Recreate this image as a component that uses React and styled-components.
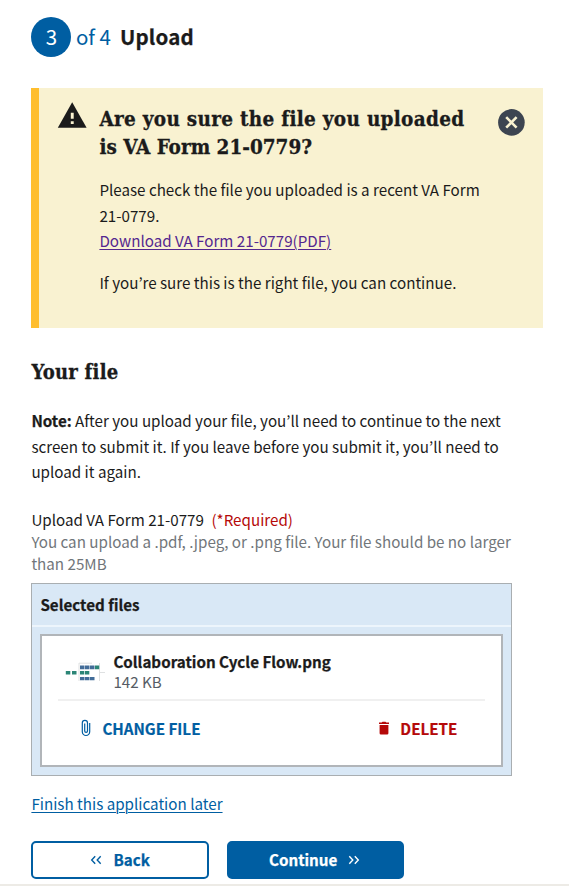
import React from "react";
import styled, { createGlobalStyle } from "styled-components";

const sans = '"Noto Sans CJK KR", "Noto Sans", sans-serif';
const serif = '"DejaVu Serif Condensed", "DejaVu Serif", serif';
const blue = "#005ea2";
const ink = "#1b1b1b";

const GlobalStyle = createGlobalStyle`
  *, *::before, *::after { box-sizing: border-box; }
  body { margin: 0; background: #fff; overflow: hidden; }
  strong { -webkit-text-stroke: 0.25px currentColor; }
`;

const Page = styled.main`
  display: flex;
  flex-direction: column;
  height: 886px;
  padding-left: 31.4px;
  border-bottom: 2px solid #edebe6;
  background: #fff;
  color: ${ink};
  font-family: ${sans};
  font-size: 15.18px;
  line-height: 25.5px;
`;

const Line = styled.span`
  display: block;
  white-space: nowrap;
  letter-spacing: ${(p) => p.$track || 0}px;
`;

const StepHeader = styled.header`
  display: flex;
  align-items: center;
  height: 41px;
  margin-top: 16px;
  font-size: 20.5px;
  line-height: 38px;
`;

const StepCircle = styled.span`
  width: 40px;
  height: 40px;
  border-radius: 50%;
  background: ${blue};
  color: #fff;
  text-align: center;
  line-height: 39px;
`;

const StepCount = styled.span`
  width: 44px;
  height: 40px;
  margin-left: 4.5px;
  color: ${blue};
  white-space: nowrap;
`;

const StepTitle = styled.strong`
  height: 40px;
  letter-spacing: 0.2px;
`;

const Alert = styled.section`
  display: flex;
  width: 512px;
  height: 240px;
  margin-top: 31px;
  padding: 16px 18px 0 18px;
  border-left: 8px solid #ffbe2e;
  background: #f9f2d1;
`;

const WarningIcon = styled.svg`
  flex: none;
  width: 30px;
  height: 27px;
  margin-right: 12px;
  margin-top: -3px;
`;

const AlertBody = styled.div`
  width: 398px;
`;

const Heading = styled.h2`
  margin: ${(p) => p.$top || 0}px 0 0;
  font-family: ${serif};
  font-size: ${(p) => p.$size}px;
  line-height: 28px;
  font-weight: 700;
  -webkit-text-stroke: 0.3px ${ink};
`;

const Paragraph = styled.p`
  margin: ${(p) => p.$top}px 0 0;
`;

const Link = styled.a`
  color: ${(p) => (p.$visited ? "#54278f" : blue)};
  text-decoration: underline;
  text-decoration-thickness: 1px;
  text-underline-offset: 2px;
  text-decoration-skip-ink: auto;
`;

const CloseButton = styled.button`
  flex: none;
  width: 28px;
  height: 28px;
  margin-top: 4px;
  padding: 0;
  border: 0;
  background: none;
  svg { display: block; }
`;

const FieldLabel = styled.div`
  display: flex;
  gap: 7.5px;
  margin-top: 23px;
  line-height: 22px;
`;

const Required = styled.span`
  color: #b50909;
`;

const Hint = styled.div`
  color: #71767a;
  line-height: 22px;
`;

const FilesPanel = styled.section`
  width: 480.6px;
  height: 193px;
  margin-top: 9.5px;
  border: 1px solid #a9aeb1;
  background: #d9e8f6;
`;

const PanelTitle = styled.h3`
  height: 43px;
  margin: 0;
  padding-left: 8px;
  border-bottom: 2px solid #edf5fc;
  font-size: inherit;
  font-weight: 700;
  line-height: 41px;
  -webkit-text-stroke: 0.25px currentColor;
`;

const FileCard = styled.div`
  width: 463px;
  height: 133px;
  margin: 7px 0 0 8px;
  padding: 15px 16px 0;
  border: 2px solid #b1b5b9;
  background: #fff;
`;

const FileInfo = styled.div`
  display: flex;
  height: 50px;
  padding-left: 7px;
  border-bottom: 2px solid #f0f0f0;
  line-height: 20px;
`;

const Thumbnail = styled.svg`
  width: 40px;
  height: 22px;
  margin: 10px 8px 0 0;
`;

const FileSize = styled.span`
  display: block;
  color: #565c65;
`;

const FileActions = styled.div`
  display: flex;
  justify-content: space-between;
  padding: 14px 28px 0 22px;
`;

const ActionButton = styled.button`
  display: flex;
  align-items: center;
  gap: 10px;
  height: 26px;
  padding: 0;
  border: 0;
  background: none;
  color: ${(p) => p.$color};
  font: 700 15.17px/26px ${sans};
  -webkit-text-stroke: 0.2px currentColor;
`;

const FormButtons = styled.div`
  display: flex;
  gap: 18px;
  margin-top: 24.5px;
`;

const FormButton = styled.button`
  display: flex;
  align-items: center;
  justify-content: center;
  gap: 11px;
  width: 177.5px;
  height: 38px;
  padding: ${(p) => (p.$primary ? "0 2px 2px 0" : "0 0 2px")};
  border: 2px solid ${blue};
  border-radius: 5px;
  background: ${(p) => (p.$primary ? blue : "#fff")};
  color: ${(p) => (p.$primary ? "#fff" : blue)};
  font: 700 15.17px/32px ${sans};
  -webkit-text-stroke: 0.25px currentColor;
`;

const ChevronIcon = styled.svg`
  width: 12px;
  height: 10px;
  margin-top: 2px;
`;

function Chevrons({ left }) {
  return (
    <ChevronIcon viewBox="0 0 12 10" fill="none" stroke="currentColor" strokeWidth="1.4">
      <path d={left ? "M5.2 1.2 1.7 5l3.5 3.8M10.7 1.2 7.2 5l3.5 3.8" : "M1.3 1.2 4.8 5 1.3 8.8M6.8 1.2 10.3 5 6.8 8.8"} />
    </ChevronIcon>
  );
}

export default function App() {
  return (
    <Page>
      <GlobalStyle />
      <StepHeader>
        <StepCircle>3</StepCircle>
        <StepCount>of 4</StepCount>
        <StepTitle>Upload</StepTitle>
      </StepHeader>

      <Alert>
        <WarningIcon viewBox="0 0 30 27">
          <path fill={ink} d="M15.2 1.3 29.6 26.7H.8z" />
          <path fill="#f9f2d1" d="M13.8 11.8h2.9v6h-2.9zM13.8 20.2h2.9V23h-2.9z" />
        </WarningIcon>
        <AlertBody>
          <Heading $size={20.5} $top={1}>
            <Line $track={0.3}>Are you sure the file you uploaded</Line>
            <Line>is VA Form 21-0779?</Line>
          </Heading>
          <Paragraph $top={16}>
            <Line>Please check the file you uploaded is a recent VA Form</Line>
            <Line>21-0779.</Line>
            <Line><Link $visited>Download VA Form 21-0779(PDF)</Link></Line>
          </Paragraph>
          <Paragraph $top={16.5}>
            <Line>If you’re sure this is the right file, you can continue.</Line>
          </Paragraph>
        </AlertBody>
        <CloseButton aria-label="Close">
          <svg width="28" height="28" viewBox="0 0 28 28">
            <circle cx="14.4" cy="14.4" r="13.3" fill="#3d4551" />
            <path d="m9.2 9.2 10.4 10.4m0-10.4L9.2 19.6" stroke="#f9f2d1" strokeWidth="2.6" />
          </svg>
        </CloseButton>
      </Alert>

      <Heading $size={20} $top={30}>
        <Line $track={0.25}>Your file</Line>
      </Heading>
      <Paragraph $top={22}>
        <Line><strong>Note:</strong> After you upload your file, you’ll need to continue to the next</Line>
        <Line>screen to submit it. If you leave before you submit it, you’ll need to</Line>
        <Line>upload it again.</Line>
      </Paragraph>

      <FieldLabel>
        <Line>Upload VA Form 21-0779</Line>
        <Required>(*Required)</Required>
      </FieldLabel>
      <Hint>
        <Line>You can upload a .pdf, .jpeg, or .png file. Your file should be no larger</Line>
        <Line>than 25MB</Line>
      </Hint>

      <FilesPanel>
        <PanelTitle>Selected files</PanelTitle>
        <FileCard>
          <FileInfo>
            <Thumbnail viewBox="0 0 40 22">
              <path d="M14 2.2h13M14 2v18M34.5 2v18M35 11.5h5" stroke="#dfe1e2" fill="none" />
              <g fill="#2b8576">
                <path d="M.8 10h4.5v3.5H.8zM7 10h4.5v3.5H7zM15 10h4.3v3.5H15zM20 10h4.3v3.5H20zM30 4.5h4.2v3.7H30z" />
              </g>
              <g fill="#426c98">
                <path d="M15 4.5h4.5v3.7H15zM20 4.5h4.5v3.7H20zM25 4.5h4.5v3.7H25zM15 16h4.5v3.3H15zM20 16h4.5v3.3H20zM25 16h4.5v3.3H25z" />
              </g>
            </Thumbnail>
            <div>
              <Line as="strong">Collaboration Cycle Flow.png</Line>
              <FileSize>142 KB</FileSize>
            </div>
          </FileInfo>
          <FileActions>
            <ActionButton $color={blue}>
              <svg width="12" height="18" viewBox="0 0 12 18" fill="none" stroke="currentColor" strokeWidth="1.2">
                <path d="M9.7 4v8.8a3.7 3.7 0 0 1-7.4 0V4a2.6 2.6 0 0 1 5.2 0v8a1.4 1.4 0 0 1-2.8 0V4.5" />
              </svg>
              CHANGE FILE
            </ActionButton>
            <ActionButton $color="#b50909">
              <svg width="12" height="14" viewBox="0 0 12 14" fill="currentColor">
                <path d="M1 1.5h2.7L4.5.7h3l.8.8H11V3H1zM1.6 4h8.8v8.2q0 1.3-1.3 1.3H2.9q-1.3 0-1.3-1.3z" />
              </svg>
              DELETE
            </ActionButton>
          </FileActions>
        </FileCard>
      </FilesPanel>

      <Paragraph $top={15}>
        <Line><Link>Finish this application later</Link></Line>
      </Paragraph>
      <FormButtons>
        <FormButton><Chevrons left />Back</FormButton>
        <FormButton $primary>Continue<Chevrons /></FormButton>
      </FormButtons>
    </Page>
  );
}
